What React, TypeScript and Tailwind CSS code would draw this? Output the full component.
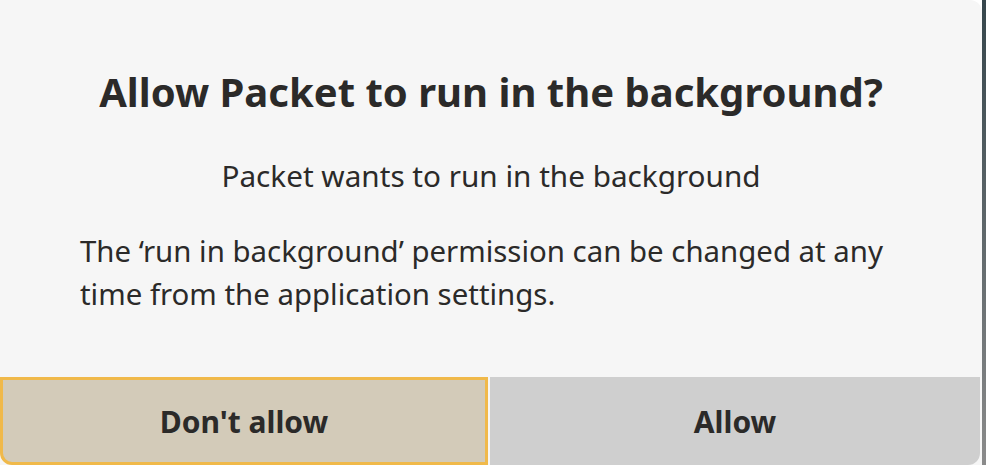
export default function App() {
  return (
    <div className="flex h-[465px] w-[986px] overflow-hidden font-['Noto_Sans',sans-serif] text-[#2b2a29]">
      <div className="flex h-full w-[982px] flex-col rounded-tr-[12px] bg-[#f6f6f6]">
        <h1 className="mt-[65px] text-center text-[40px] font-bold leading-[54px]">
          Allow Packet to run in the background?
        </h1>
        <p className="mt-[37px] text-center text-[29.7px] leading-[40px]">
          Packet wants to run in the background
        </p>
        <p className="mt-[34px] pl-[80px] pr-[80px] text-[29.4px] leading-[43px]">
          The ‘run in background’ permission can be changed at any time from the application settings.
        </p>
        <div className="mt-auto flex h-[88px] gap-[2px] pr-[2px]">
          <button className="flex w-[488px] items-center justify-center rounded-bl-[12px] border-[3px] border-[#f0b94a] bg-[#d3cbb9] text-[30px] font-bold">
            Don't allow
          </button>
          <button className="flex flex-1 items-center justify-center rounded-br-[12px] bg-[#cfcfcf] text-[30px] font-bold">
            Allow
          </button>
        </div>
      </div>
      <div className="h-full flex-1 bg-gradient-to-b from-[#36464c] to-[#8b8b8b]" />
    </div>
  );
}
